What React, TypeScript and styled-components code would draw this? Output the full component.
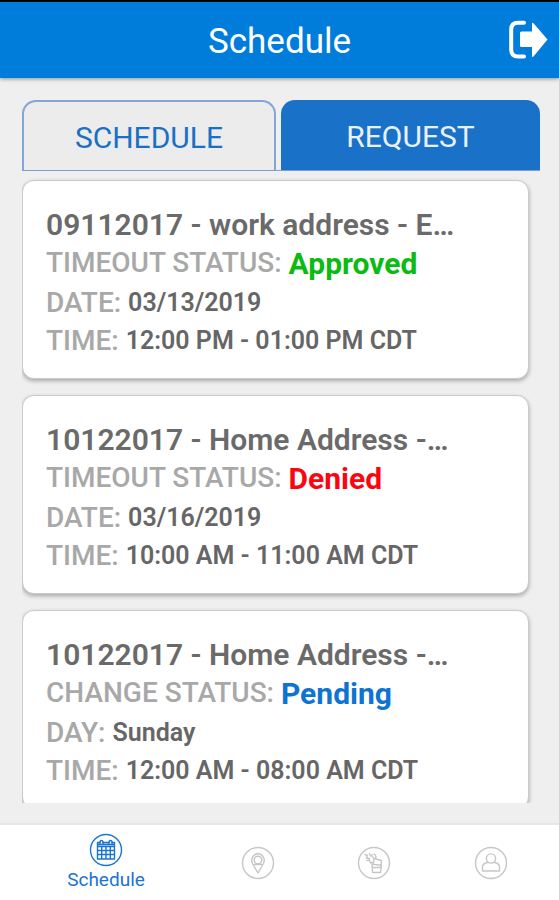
import React from "react";
import styled, { createGlobalStyle } from "styled-components";

const GlobalStyle = createGlobalStyle`
  *, *::before, *::after { box-sizing: border-box; }
  body {
    margin: 0;
    background: #efefef;
    font-family: Roboto, "Liberation Sans", sans-serif;
  }
  button { font: inherit; cursor: pointer; }
`;

const Screen = styled.div`
  display: flex;
  flex-direction: column;
  height: 100vh;
  background: #efefef;
`;

const Header = styled.header`
  display: grid;
  grid-template-columns: 60px 1fr 60px;
  align-items: center;
  flex: none;
  height: 78px;
  border-top: 2px solid #000;
  background: #007ddb;
  box-shadow: 0 1px 4px rgba(0, 0, 0, 0.4);
`;

const HeaderTitle = styled.h1`
  grid-column: 2;
  margin: 0;
  padding-top: 4px;
  color: #fff;
  font-size: 35px;
  line-height: 42px;
  font-weight: 400;
  text-align: center;
`;

const LogoutButton = styled.button`
  display: flex;
  justify-content: flex-end;
  padding: 0 11px 0 0;
  border: 0;
  background: none;
  color: #fff;
`;

const Main = styled.main`
  display: flex;
  flex-direction: column;
  flex: 1;
  min-height: 0;
  padding: 22px 19px 20px 22px;
`;

const Tabs = styled.div`
  display: grid;
  grid-template-columns: 49fr 50fr;
  gap: 5px;
  flex: none;
  border-bottom: 1px solid #7f9fd3;
`;

const Tab = styled.button<{ $active?: boolean }>`
  height: 70px;
  padding: ${(p) => (p.$active ? "4px 0 0" : "3px 0 0")};
  border: ${(p) => (p.$active ? "0" : "2px solid #84a5d8")};
  border-bottom: 0;
  border-radius: 14px 14px 0 0;
  background: ${(p) => (p.$active ? "#1972c7" : "#ececec")};
  color: ${(p) => (p.$active ? "#e9f1fb" : "#1a70c4")};
  font-size: 30px;
  line-height: 36px;
`;

const List = styled.ul`
  display: flex;
  flex-direction: column;
  gap: 16px;
  flex: 1;
  min-height: 0;
  margin: 0;
  padding: 9px 11px 0 0;
  overflow: hidden;
  list-style: none;
`;

const Card = styled.li`
  flex: none;
  padding: 25px 23px 18px;
  border: 1px solid #cacaca;
  border-radius: 12px;
  background: #fff;
  box-shadow: 0 2px 4px rgba(0, 0, 0, 0.3);
  font-weight: 500;
`;

const CardTitle = styled.h2`
  margin: 0;
  overflow: hidden;
  color: #6a6a6a;
  font-size: 30px;
  line-height: 38px;
  font-weight: 600;
  white-space: nowrap;
`;

const Row = styled.div`
  display: flex;
  align-items: flex-start;
  gap: 7px;
  white-space: nowrap;
`;

const Label = styled.span`
  color: #a8a8a8;
  font-size: 28px;
  line-height: 38px;
`;

const Value = styled.span`
  color: #666;
  font-size: 25px;
  line-height: 38px;
  font-weight: 600;
`;

const Status = styled.span<{ $color: string }>`
  color: ${(p) => p.$color};
  font-size: 30px;
  line-height: 40px;
  font-weight: 700;
`;

const Nav = styled.nav`
  display: flex;
  justify-content: space-between;
  align-items: center;
  flex: none;
  height: 77px;
  padding: 0 51px 0 60px;
  border-top: 2px solid #e6e6e6;
  background: #fff;
`;

const NavItem = styled.button<{ $active?: boolean }>`
  display: flex;
  flex-direction: column;
  align-items: center;
  gap: 1px;
  width: ${(p) => (p.$active ? "92px" : "34px")};
  padding: 0;
  border: 0;
  background: none;
  color: ${(p) => (p.$active ? "#1a75d2" : "#c6c6c6")};
  font-size: 19px;
  line-height: 24px;
  margin-right: ${(p) => (p.$active ? "6px" : "0")};
`;

const LogoutIcon = () => (
  <svg width="40" height="40" viewBox="0 0 40 40" aria-hidden="true">
    <path d="M16 2.8H10C5.5 2.8 3.2 5.2 3.2 9.500V29.500C3.200 34 5.500 36.600 10 36.600H16" fill="none" stroke="currentColor" strokeWidth="4" strokeLinecap="round" />
    <path d="M12 13Q12 11.500 13.500 11.500H24V3.500Q24 2 25.500 3.200L39.500 19.500L25.500 36.500Q24 37.500 24 36V27H13.500Q12 27 12 25.500Z" fill="currentColor" />
  </svg>
);

const NavIcon = ({ children }: { children: React.ReactNode }) => (
  <svg width="34" height="34" viewBox="0 0 34 34" fill="none" stroke="currentColor" strokeWidth="1.4" strokeLinejoin="round" strokeLinecap="round" aria-hidden="true">
    <circle cx="17" cy="17" r="15.500" />
    {children}
  </svg>
);

const CalendarIcon = () => (
  <NavIcon>
    <path d="M8.500 9.500H11M14 9.500H20M23 9.500H25.500V26H8.500V9.500M8.500 13.500H25.500M8.500 17.500H25.500M8.500 21.500H25.500M12.700 13.500V26M17 13.500V26M21.300 13.500V26M8.500 11.500H25.500" />
    <path d="M11 11V8.500Q12.500 6.500 14 8.500V11M20 11V8.500Q21.500 6.500 23 8.500V11" />
  </NavIcon>
);

const PinIcon = () => (
  <NavIcon>
    <path d="M17 27L11.500 17.500C9.500 13.500 12 7.800 17 7.800S24.500 13.500 22.500 17.500Z" />
    <circle cx="17" cy="14" r="3.800" />
    <path d="M13.500 18.500H20.500" />
  </NavIcon>
);

const TasksIcon = () => (
  <NavIcon>
    <path d="M15 18L24.500 19.500L23.500 26.500H15.500ZM16 21.500H23.500M16.500 18L17 12.500L24.500 14.500L24 19M17 12.500L15 10.500" />
    <path d="M8 8.500L10.500 9.500L9.500 12L12.500 12.500M12.500 7.500L13.500 10L16 8.500M17.500 8L19 10.500L18.500 12.500M10 14.500L12.500 14L13.500 17L15.500 16.500" />
  </NavIcon>
);

const ProfileIcon = () => (
  <NavIcon>
    <circle cx="17" cy="12.500" r="4.600" />
    <path d="M13.500 16.500Q8.500 17.500 8.500 21V25H25.500V21Q25.500 17.500 20.500 16.500" />
  </NavIcon>
);

const STATUS_COLORS = {
  Approved: "#0abb12",
  Denied: "#fb0510",
  Pending: "#0e74d2",
};

type Request = {
  title: string;
  statusLabel: string;
  status: keyof typeof STATUS_COLORS;
  dayLabel: string;
  day: string;
  time: string;
};

const requests: Request[] = [
  { title: "09112017 - work address - E…", statusLabel: "TIMEOUT STATUS:", status: "Approved", dayLabel: "DATE:", day: "03/13/2019", time: "12:00 PM - 01:00 PM CDT" },
  { title: "10122017 - Home Address -…", statusLabel: "TIMEOUT STATUS:", status: "Denied", dayLabel: "DATE:", day: "03/16/2019", time: "10:00 AM - 11:00 AM CDT" },
  { title: "10122017 - Home Address -…", statusLabel: "CHANGE STATUS:", status: "Pending", dayLabel: "DAY:", day: "Sunday", time: "12:00 AM - 08:00 AM CDT" },
];

export default function App() {
  return (
    <Screen>
      <GlobalStyle />
      <Header>
        <HeaderTitle>Schedule</HeaderTitle>
        <LogoutButton aria-label="Log out">
          <LogoutIcon />
        </LogoutButton>
      </Header>
      <Main>
        <Tabs role="tablist">
          <Tab role="tab" aria-selected={false}>SCHEDULE</Tab>
          <Tab role="tab" aria-selected $active>REQUEST</Tab>
        </Tabs>
        <List>
          {requests.map((r) => (
            <Card key={r.title + r.status}>
              <CardTitle>{r.title}</CardTitle>
              <Row>
                <Label>{r.statusLabel}</Label>
                <Status $color={STATUS_COLORS[r.status]}>{r.status}</Status>
              </Row>
              <Row>
                <Label>{r.dayLabel}</Label>
                <Value>{r.day}</Value>
              </Row>
              <Row>
                <Label>TIME:</Label>
                <Value>{r.time}</Value>
              </Row>
            </Card>
          ))}
        </List>
      </Main>
      <Nav>
        <NavItem $active aria-current="page">
          <CalendarIcon />
          Schedule
        </NavItem>
        <NavItem aria-label="Locations"><PinIcon /></NavItem>
        <NavItem aria-label="Tasks"><TasksIcon /></NavItem>
        <NavItem aria-label="Profile"><ProfileIcon /></NavItem>
      </Nav>
    </Screen>
  );
}
